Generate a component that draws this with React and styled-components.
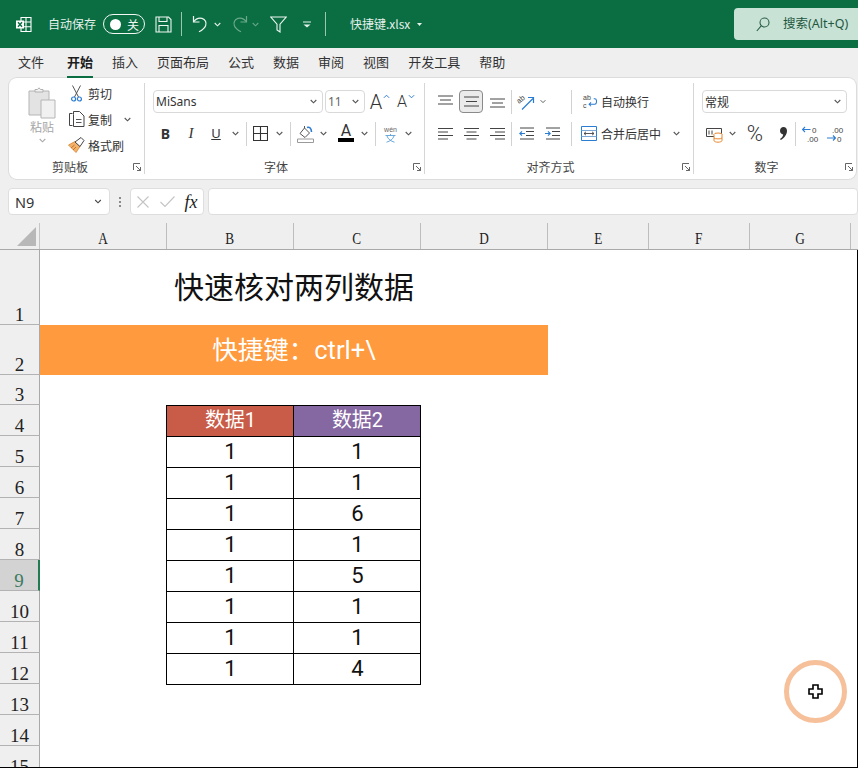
import React from "react";
import styled, { createGlobalStyle } from "styled-components";

const CJK = `"Noto Sans CJK SC", "Noto Sans", sans-serif`;
const CELL = `Roboto, "Noto Sans CJK SC", sans-serif`;
const HEAD = `"Liberation Serif", serif`;

const Global = createGlobalStyle`
  html, body { margin: 0; padding: 0; background: #fff; }
  #root { width: 858px; height: 768px; }
`;

const Page = styled.div`
  position: relative; width: 858px; height: 768px; overflow: hidden;
  background: #efefef; font-family: ${CJK}; display: flex; flex-direction: column;
`;

/* ---------- title bar ---------- */
const TitleBar = styled.header`
  height: 48px; flex: none; background: #0a6e42; color: #e6f1ec;
  display: flex; align-items: center; padding-left: 16px;
`;
const TitleText = styled.span`
  font-size: 12px; line-height: 16px; white-space: nowrap; margin-left: ${p => p.$ml || 0}px;
`;
const TitleIcon = styled.span`
  display: flex; align-items: center; justify-content: center; flex: none;
  width: ${p => p.$w}px; margin-left: ${p => p.$ml || 0}px;
  opacity: ${p => p.$dim ? 0.42 : 1};
`;
const TitleSep = styled.span`
  width: 1px; height: 24px; flex: none; background: #9cc6b2; margin-left: ${p => p.$ml}px;
`;
const Toggle = styled.span`
  box-sizing: border-box; width: 42px; height: 20px; margin-left: 7px; flex: none;
  border: 1px solid #f3f8f5; border-radius: 10px; display: flex; align-items: center;
  justify-content: space-between; padding: 0 5px 0 6px; font-size: 12px; color: #f3f8f5;
`;
const Knob = styled.span`
  width: 11px; height: 11px; border-radius: 50%; background: #fff;
`;
const SearchBox = styled.div`
  margin-left: auto; width: 124px; height: 32px; flex: none; box-sizing: border-box;
  background: #c8e3d6; border-radius: 4px 0 0 4px; display: flex; align-items: center;
  padding-left: 22px; color: #24573f; font-size: 12.5px; white-space: nowrap; overflow: hidden;
  font-family: "Noto Sans", "Noto Sans CJK SC", sans-serif;
`;
const SearchLabel = styled.span`margin-left: 13px; line-height: 16px; margin-top: -1px;`;

/* ---------- tabs ---------- */
const TabBar = styled.nav`
  height: 30px; flex: none; display: flex; align-items: stretch; padding-left: 18px; gap: 19px;
`;
const Tab = styled.span`
  position: relative; font-size: 13px; line-height: 28px; color: ${p => p.$active ? "#1d1d1d" : "#333"};
  font-weight: ${p => p.$active ? 700 : 400}; margin-left: ${p => p.$ml || 0}px; white-space: nowrap;
  border-bottom: 2px solid ${p => p.$active ? "#0a6e42" : "transparent"};
  height: 28px;
`;

/* ---------- ribbon ---------- */
const Ribbon = styled.section`
  box-sizing: border-box; flex: none; width: 847px; height: 101px; margin-left: 9px;
  background: #fff; border-radius: 8px; padding: 5px 0; display: flex;
  box-shadow: 0 0 0 1px #dcdcdc;
`;
const Group = styled.div`
  box-sizing: border-box; width: ${p => p.$w}px; flex: none; display: flex; flex-direction: column;
  border-right: ${p => p.$last ? "none" : "1px solid #d6d6d6"};
`;
const GroupBody = styled.div`
  display: flex; flex-direction: column; gap: 9px; padding-top: 7px; padding-left: 8px; flex: 1;
`;
const ClipBody = styled.div`display: flex; flex: 1;`;
const ToolRow = styled.div`
  display: flex; align-items: center; height: 23px; font-size: 12px; color: #333; white-space: nowrap;
`;
const Tool = styled.span`
  display: flex; align-items: center; justify-content: center; flex: none;
  width: ${p => p.$w}px; height: 23px; margin-left: ${p => p.$ml || 0}px;
  box-sizing: border-box; color: #444;
  ${p => p.$active ? "background:#ebebeb;border:1px solid #8a8a8a;border-radius:4px;" : ""}
`;
const Sep = styled.span`
  width: 1px; height: 24px; flex: none; background: #d2d2d2; margin-left: ${p => p.$ml || 0}px;
`;
const Select = styled.div`
  box-sizing: border-box; width: ${p => p.$w}px; height: 23px; flex: none; margin-left: ${p => p.$ml || 0}px;
  border: 1px solid #d9d9d9; border-radius: 4px; display: flex; align-items: center;
  justify-content: space-between; padding: 0 5px 0 2px; background: #fff;
  font-size: 12px; color: ${p => p.$muted ? "#666" : "#333"};
  font-family: "Noto Sans", ${CJK};
`;
const ToolText = styled.span`font-size: 12px; color: #333; margin-left: ${p => p.$ml || 0}px;`;
const LabelRow = styled.div`display: flex; align-items: center; height: 15px; flex: none;`;
const GroupLabel = styled.span`
  flex: 1; text-align: center; font-size: 12px; line-height: 15px; color: #444;
  padding-left: ${p => p.$pl || 0}px;
`;
const Launcher = styled.span`
  width: 17px; flex: none; display: flex; justify-content: flex-end; padding-right: 3px; box-sizing: border-box;
`;
const PasteCol = styled.div`
  width: 44px; margin-left: 11px; padding-top: 4px; display: flex; flex-direction: column;
  align-items: center; font-size: 12px; color: #a6a6a6; line-height: 16px;
`;
const PasteChev = styled.span`display: flex; margin-top: 3px;`;
const ClipCol = styled.div`display: flex; flex-direction: column; gap: 6px; margin-left: 1px;`;
const ClipRow = styled.div`display: flex; align-items: center; height: 20px; font-size: 12px; color: #333;`;
const ClipIcon = styled.span`
  width: 23px; display: flex; justify-content: center; flex: none;
`;
const ColorBar = styled.span`
  display: block; width: 16px; height: 4px; background: ${p => p.$c}; margin-top: -1px;
`;
const ColorTool = styled.span`
  display: flex; flex-direction: column; align-items: center; font-family: Roboto, sans-serif;
  font-size: 16px; line-height: 16px; color: #333; margin-top: -2px;
`;
const Glyph = styled.span`
  font-family: ${p => p.$serif ? HEAD : `"Noto Sans", sans-serif`}; line-height: 1; color: #333; font-size: ${p => p.$fs}px;
  font-weight: ${p => p.$bold ? 700 : 400};
  font-style: ${p => p.$italic ? "italic" : "normal"};
  text-decoration: ${p => p.$under ? "underline" : "none"};
`;
const Percent = styled.span`
  font-family: Roboto, sans-serif; font-weight: 300; font-size: 22px; line-height: 1; color: #333;
`;
const BigA = styled.span`
  font-family: Roboto, sans-serif; font-weight: 300; font-size: ${p => p.$fs}px; color: #333; line-height: 1;
`;
const Caret = styled.span`display: flex; align-self: flex-start; margin-top: 4px; margin-left: 1px;`;

/* ---------- formula bar ---------- */
const FormulaBar = styled.div`
  flex: none; height: 27px; margin-top: 9px; padding-left: 8px; display: flex; align-items: stretch;
`;
const FBox = styled.div`
  box-sizing: border-box; background: #fff; border: 1px solid #dedede; border-radius: 4px;
  display: flex; align-items: center; flex: none; width: ${p => p.$w}px; margin-left: ${p => p.$ml || 0}px;
`;
const NameText = styled.span`
  font-family: "Noto Sans", sans-serif; font-size: 14.5px; color: #333; margin-left: 6px; flex: 1;
`;
const NameChev = styled.span`display: flex; margin-right: 6px;`;
const Dots = styled.span`
  display: flex; flex-direction: column; justify-content: center; gap: 2px; margin-left: 9px; width: 2px;
`;
const Dot = styled.i`width: 2px; height: 2px; background: #8a8a8a; display: block;`;
const FxButton = styled.span`
  display: flex; justify-content: center; align-items: center; width: 24px; flex: none;
`;
const FxText = styled.span`
  font-family: ${HEAD}; font-style: italic; font-size: 18px; color: #222; line-height: 1;
`;

/* ---------- sheet ---------- */
const ColHeader = styled.div`
  flex: none; height: 27px; margin-top: 8px; display: flex; background: #efefef;
  border-bottom: 1px solid #a9a9a9; box-sizing: border-box;
`;
const Corner = styled.div`
  box-sizing: border-box; width: 40px; flex: none; display: flex; align-items: flex-end;
  justify-content: flex-end; padding: 0 3px 3px 0; border-right: 1px solid #c6c6c6;
`;
const ColHead = styled.div`
  box-sizing: border-box; width: ${p => p.$w}px; flex: none; border-right: 1px solid #bdbdbd;
  display: flex; align-items: flex-end; justify-content: center; overflow: hidden;
  font-family: ${HEAD}; font-size: 17px; line-height: 20px; color: #222;
`;
const ColLetter = styled.span`display: inline-block; transform: scaleX(0.78);`;
const Sheet = styled.div`
  flex: 1; min-height: 0; display: flex; background: #fff; overflow: hidden;
  border-right: 1px solid #000; border-bottom: 1px solid #000;
`;
const RowHeads = styled.div`display: flex; flex-direction: column; width: 40px; flex: none;`;
const RowHead = styled.div`
  box-sizing: border-box; height: ${p => p.$h}px; flex: none; width: 40px;
  background: ${p => p.$active ? "#d3d3d3" : "#efefef"};
  border-bottom: 1px solid #b3b3b3;
  border-right: ${p => p.$active ? "2px solid #217a50" : "1px solid #a9a9a9"};
  display: flex; align-items: flex-end; justify-content: center;
  font-family: ${HEAD}; font-size: 19px; line-height: 18px;
  color: ${p => p.$active ? "#3d7a5e" : "#222"};
`;
const Cells = styled.div`flex: 1; min-width: 0;`;
const Title = styled.div`
  width: 508px; height: 75px; box-sizing: border-box; display: flex; align-items: flex-end;
  justify-content: center; font-size: 30px; line-height: 44px; color: #111; padding-bottom: 18px;
`;
const Banner = styled.div`
  width: 508px; height: 50px; background: #ff9a3e; color: #fff; font-size: 25.5px; line-height: 50px;
  text-align: center; margin-bottom: 30px; white-space: pre; font-family: ${CELL};
`;
const DataTable = styled.div`
  margin-left: 126px; width: 255px; box-sizing: border-box; display: grid;
  grid-template-columns: 127px 127px; border-left: 1px solid #000; border-top: 1px solid #000;
`;
const DataCell = styled.div`
  box-sizing: border-box; height: 31px; border-right: 1px solid #000; border-bottom: 1px solid #000;
  text-align: center; font-family: ${CELL}; font-size: ${p => p.$head ? 20 : 22}px;
  line-height: 29px; padding-left: 1px;
  background: ${p => p.$bg || "transparent"}; color: ${p => p.$bg ? "#fff" : "#111"};
`;

/* ---------- cursor highlight ---------- */
const CursorRing = styled.div`
  position: absolute; left: 784px; top: 660px; width: 63px; height: 63px; box-sizing: border-box;
  border: 5px solid #f5c09a; border-radius: 50%; display: flex; align-items: center; justify-content: center;
`;

/* ---------- icons ---------- */
const Chev = ({ c = "#555", w = 7 }) => (
  <svg width={w} height="5" viewBox="0 0 7 5" fill="none"><path d="M.7 1 3.5 3.8 6.3 1" stroke={c} strokeWidth="1.1" /></svg>
);
const ExcelIcon = () => (
  <svg width="16" height="17" viewBox="0 0 16 17" fill="none">
    <path d="M5 1.5h10v14H5zM10 1.5v14M5 6h10M5 10.8h10" stroke="#fff" strokeWidth="1.1" />
    <rect x="0" y="4.5" width="8" height="8" fill="#fff" />
    <path d="M2 6.2 6 10.8M6 6.2 2 10.8" stroke="#0a6e42" strokeWidth="1.4" />
  </svg>
);
const SaveIcon = () => (
  <svg width="17" height="17" viewBox="0 0 17 17" fill="none" stroke="#eef6f2" strokeWidth="1.1">
    <path d="M1 1h12.5L16 3.5V16H1z" /><path d="M4 1v4.5h8V1M4 16V9.5h9V16" />
  </svg>
);
const UndoIcon = ({ flip }) => (
  <svg width="16" height="18" viewBox="0 0 16 18" fill="none" stroke="#f0f7f3" strokeWidth="1.2"
    style={flip ? { transform: "scaleX(-1)" } : undefined}>
    <path d="M1.5 1v6h6" /><path d="M1.5 7C4 3.5 7 2.6 10 3.4c3.4 1 4.8 4.4 3.6 7.4-.8 2-2.6 4-6.6 6" />
  </svg>
);
const FunnelIcon = () => (
  <svg width="17" height="17" viewBox="0 0 17 17" fill="none" stroke="#f0f7f3" strokeWidth="1.1">
    <path d="M.8 1h15.4L10 8.2V16L7 14V8.2z" />
  </svg>
);
const CustomizeIcon = () => (
  <svg width="8" height="7" viewBox="0 0 8 7" fill="none"><path d="M0 1h8" stroke="#e6f1ec" /><path d="M.5 3.5h7L4 6.5z" fill="#e6f1ec" /></svg>
);
const CustomizeCaret = () => (
  <svg width="5" height="3" viewBox="0 0 5 3"><path d="M0 0h5L2.5 3z" fill="#e6f1ec" /></svg>
);
const SearchIcon = () => (
  <svg width="14" height="15" viewBox="0 0 14 15" fill="none" stroke="#2b5e46" strokeWidth="1.1">
    <circle cx="8.5" cy="5.5" r="4.5" /><path d="M5.2 8.8.8 14" />
  </svg>
);
const PasteIcon = () => (
  <svg width="28" height="32" viewBox="0 0 28 32" fill="none">
    <path d="M1 4h20v24H1z" fill="#e3e3e3" stroke="#b5b5b5" />
    <path d="M7 5V2.5h2.5L11 .8l1.5 1.7H15V5z" fill="#f1f1f1" stroke="#b0b0b0" />
    <path d="M13 13h14v18H13z" fill="#f1f1f1" stroke="#b5b5b5" />
  </svg>
);
const CutIcon = () => (
  <svg width="11" height="17" viewBox="0 0 11 17" fill="none">
    <path d="M1.5 .5 7.5 12M9.5 .5 3.5 12" stroke="#555" strokeWidth="1" />
    <circle cx="2.6" cy="14" r="2" stroke="#2b7cd3" strokeWidth="1.2" />
    <circle cx="8.4" cy="14" r="2" stroke="#2b7cd3" strokeWidth="1.2" />
  </svg>
);
const CopyIcon = () => (
  <svg width="16" height="16" viewBox="0 0 16 16" fill="none" stroke="#444" strokeWidth="1">
    <path d="M3.5 14.5H.5V2.5h3" /><path d="M4.5 3.5V.5h6l4.5 4.5v10.5H4.5z" />
    <path d="M7 8.5h5.5M7 11.5h5.5" strokeWidth=".9" />
  </svg>
);
const FormatIcon = () => (
  <svg width="17" height="16" viewBox="0 0 17 16" fill="none">
    <path d="M.5 8 7 4.5l5 5L8 15.5z" fill="#f4b36b" stroke="#d9822b" strokeWidth=".8" />
    <path d="M7 5 13 .5l3 3-4 6z" fill="#fff" stroke="#444" strokeWidth="1" />
    <path d="M3 11 6.5 8M5 13l3-3" stroke="#b8661c" strokeWidth=".8" />
  </svg>
);
const LauncherIcon = () => (
  <svg width="8" height="8" viewBox="0 0 8 8" fill="none" stroke="#555" strokeWidth=".9">
    <path d="M.5 7V.5H7M3 3l4.500 4.500M7.500 4v3.500H4" />
  </svg>
);
const FontUp = ({ down }) => (
  <svg width="7" height="5" viewBox="0 0 8 5" fill="none">
    <path d={down ? "M1 1l3 3 3-3" : "M1 4l3-3 3 3"} stroke="#2b7cd3" strokeWidth="1.1" />
  </svg>
);
const BorderIcon = () => (
  <svg width="15" height="15" viewBox="0 0 15 15" fill="none" stroke="#333" strokeWidth="1.1">
    <path d="M.5.5h14v14H.5zM7.500.5v14M.5 7.500h14" />
  </svg>
);
const FillIcon = () => (
  <svg width="17" height="18" viewBox="0 0 17 18" fill="none">
    <path d="M3 8.500 7.500 3l5 5L8 12.500z" stroke="#555" strokeWidth="1" />
    <path d="M7.500 3V1" stroke="#555" />
    <path d="M10 2.500c2.500-1 4.500.8 4.500 4.500" stroke="#2b7cd3" strokeWidth="1.6" />
    <path d="M.5 14h16v3.500H.5z" fill="#fff" stroke="#9a9a9a" />
  </svg>
);
const WenIcon = () => (
  <svg width="15" height="18" viewBox="0 0 15 18" fill="none">
    <path d="M2.500 10.500h10M7.500 9v1.500M4 11c1 3.200 4 5.200 7.500 6.200M11 11c-1 3.200-4 5.200-7.500 6.200" stroke="#5a9fd8" strokeWidth=".9" />
    <text x="7.500" y="6.600" textAnchor="middle" fontSize="7" fontFamily="Liberation Sans, sans-serif" fill="#666">wén</text>
  </svg>
);
const Lines = ({ widths, ys }) => (
  <svg width="15" height="13" viewBox="0 0 15 13" fill="none" stroke="#444" strokeWidth="1">
    {ys.map((y, i) => <path key={i} d={`M${(15 - widths[i]) / 2} ${y}h${widths[i]}`} />)}
  </svg>
);
const AlignLines = ({ mode }) => {
  const w = [15, 10, 15, 10];
  return (
    <svg width="15" height="14" viewBox="0 0 15 14" fill="none" stroke="#444" strokeWidth="1">
      {[1.5, 5, 8.5, 12].map((y, i) => {
        const x = mode === "l" ? 0 : mode === "r" ? 15 - w[i] : (15 - w[i]) / 2;
        return <path key={i} d={`M${x} ${y}h${w[i]}`} />;
      })}
    </svg>
  );
};
const Indent = ({ out }) => (
  <svg width="15" height="13" viewBox="0 0 15 13" fill="none">
    <path d="M1 1h14M7 4.500h8M7 8.500h8M1 12h14" stroke="#444" />
    <path d={out ? "M6 6.500H.8M3 4.300.8 6.500 3 8.700" : "M0 6.500h5.200M3 4.300l2.200 2.200L3 8.700"} stroke="#2b7cd3" strokeWidth="1.1" />
  </svg>
);
const OrientIcon = () => (
  <svg width="20" height="18" viewBox="0 0 20 18" fill="none">
    <text x="3" y="11" fontSize="7.5" fontFamily="Liberation Sans, sans-serif" fill="#444" transform="rotate(-40 3 11)">ab</text>
    <path d="M6 16.500 17 5.500M12 4.500h5.500V10" stroke="#2b7cd3" strokeWidth="1.2" />
  </svg>
);
const WrapIcon = () => (
  <svg width="15" height="17" viewBox="0 0 15 17" fill="none">
    <text x="0" y="7" fontSize="7.5" fontFamily="Liberation Sans, sans-serif" fill="#444">ab</text>
    <text x="0" y="15.500" fontSize="7.5" fontFamily="Liberation Sans, sans-serif" fill="#444">c</text>
    <path d="M11.500 5.500h1.200c1.400 0 1.800 1.200 1.800 2.800s-.6 3.200-1.800 3.200H6.500M8.600 9.400l-2.100 2.100 2.100 2.100" stroke="#2b7cd3" strokeWidth="1.1" />
  </svg>
);
const MergeIcon = () => (
  <svg width="16" height="15" viewBox="0 0 16 15" fill="none">
    <path d="M.5.5h15v14H.5z" fill="#fff" stroke="#2b7cd3" />
    <path d="M.5 4.500h15M.5 10.500h15" stroke="#7aa9d6" />
    <path d="M3 7.500h10M5 5.800 3 7.500l2 1.700M11 5.800l2 1.700-2 1.700" stroke="#444" strokeWidth=".9" />
  </svg>
);
const NumFmtIcon = () => (
  <svg width="17" height="18" viewBox="0 0 17 18" fill="none">
    <path d="M.5 3.500h15v8H.5z" stroke="#444" />
    <path d="M3 5.500v4M6 5.500v4" stroke="#444" />
    <ellipse cx="12" cy="9.500" rx="4" ry="1.500" fill="#fff" stroke="#e8862a" />
    <path d="M8 9.500v6c0 1 2 1.700 4 1.700s4-.7 4-1.700v-6M8 13c1 1.200 7 1.200 8 0" fill="#fff" stroke="#e8862a" />
  </svg>
);
const CommaIcon = () => (
  <svg width="7" height="13" viewBox="0 0 7 13"><path d="M3.500 0C5.600 0 7 1.600 7 3.800 7 7.600 4.400 11 .8 13L0 12c2-1.400 3-3 3.200-4.600C1.400 7.400 0 5.900 0 3.800 0 1.600 1.500 0 3.500 0z" fill="#333" /></svg>
);
const DecIcon = ({ inc }) => (
  <svg width="17" height="18" viewBox="0 0 17 18" fill="none">
    <text x={inc ? 5 : 10} y="7.500" fontSize="8" fontFamily="Liberation Sans, sans-serif" fill="#444">{inc ? ".00" : "0"}</text>
    <text x={inc ? 10 : 5} y="16.500" fontSize="8" fontFamily="Liberation Sans, sans-serif" fill="#444">{inc ? "0" : ".00"}</text>
    {inc
      ? <path d="M0 13h8.500M6 10.500l2.500 2.500L6 15.500" stroke="#2b7cd3" strokeWidth="1.1" />
      : <path d="M8.500 4.500H.5M3 2 .5 4.500 3 7" stroke="#2b7cd3" strokeWidth="1.1" />}
  </svg>
);
const XIcon = () => (
  <svg width="12" height="12" viewBox="0 0 12 12" stroke="#c4c4c4" strokeWidth="1.1" fill="none"><path d="M.5.5l11 11M11.500.5l-11 11" /></svg>
);
const CheckIcon = () => (
  <svg width="15" height="11" viewBox="0 0 15 11" stroke="#c4c4c4" strokeWidth="1.1" fill="none"><path d="M.5 6l4.500 4.500L14.500.5" /></svg>
);
const CornerTri = () => (
  <svg width="19" height="19" viewBox="0 0 19 19"><path d="M19 0v19H0z" fill="#b8b8b8" /></svg>
);
const PlusCursor = () => (
  <svg width="15" height="15" viewBox="0 0 15 15">
    <path d="M5 1h5v4h4v5h-4v4H5v-4H1V5h4z" fill="#fff" stroke="#000" strokeWidth="1.6" />
  </svg>
);

const tabs = ["文件", "开始", "插入", "页面布局", "公式", "数据", "审阅", "视图", "开发工具", "帮助"];
const cols = [["A", 127], ["B", 127], ["C", 127], ["D", 127], ["E", 101], ["F", 101], ["G", 101]];
const rows = [[1, 75], [2, 50], [3, 30], ...[4, 5, 6, 7, 8, 9, 10, 11, 12, 13, 14, 15].map(n => [n, 31])];
const data = [[1, 1], [1, 1], [1, 6], [1, 1], [1, 5], [1, 1], [1, 1], [1, 4]];

export default function App() {
  return (
    <Page>
      <Global />
      <TitleBar>
        <TitleIcon $w={16}><ExcelIcon /></TitleIcon>
        <TitleText $ml={16}>自动保存</TitleText>
        <Toggle><Knob />关</Toggle>
        <TitleIcon $w={17} $ml={10}><SaveIcon /></TitleIcon>
        <TitleSep $ml={9} />
        <TitleIcon $w={16} $ml={10}><UndoIcon /></TitleIcon>
        <TitleIcon $w={7} $ml={6}><Chev c="#e6f1ec" /></TitleIcon>
        <TitleIcon $w={16} $ml={11} $dim><UndoIcon flip /></TitleIcon>
        <TitleIcon $w={7} $ml={4} $dim><Chev c="#e6f1ec" /></TitleIcon>
        <TitleIcon $w={17} $ml={11}><FunnelIcon /></TitleIcon>
        <TitleIcon $w={8} $ml={16}><CustomizeIcon /></TitleIcon>
        <TitleSep $ml={14} />
        <TitleText $ml={24}>快捷键.xlsx</TitleText>
        <TitleIcon $w={5} $ml={7}><CustomizeCaret /></TitleIcon>
        <SearchBox><SearchIcon /><SearchLabel>搜索(Alt+Q)</SearchLabel></SearchBox>
      </TitleBar>

      <TabBar>
        {tabs.map((t, i) => <Tab key={t} $active={i === 1} $ml={i === 1 ? 4 : 0}>{t}</Tab>)}
      </TabBar>

      <Ribbon>
        <Group $w={136}>
          <ClipBody>
            <PasteCol>
              <PasteIcon />
              粘贴
              <PasteChev><Chev c="#aaa" /></PasteChev>
            </PasteCol>
            <ClipCol>
              <ClipRow><ClipIcon><CutIcon /></ClipIcon>剪切</ClipRow>
              <ClipRow>
                <ClipIcon><CopyIcon /></ClipIcon>复制
                <Tool $w={7} $ml={12}><Chev /></Tool>
              </ClipRow>
              <ClipRow><ClipIcon><FormatIcon /></ClipIcon>格式刷</ClipRow>
            </ClipCol>
          </ClipBody>
          <LabelRow>
            <GroupLabel $pl={4}>剪贴板</GroupLabel>
            <Launcher><LauncherIcon /></Launcher>
          </LabelRow>
        </Group>

        <Group $w={280}>
          <GroupBody>
            <ToolRow>
              <Select $w={170}>MiSans<Chev /></Select>
              <Select $w={40} $ml={2} $muted>11<Chev /></Select>
              <Tool $w={24} $ml={3}><BigA $fs={20}>A</BigA><Caret><FontUp /></Caret></Tool>
              <Tool $w={22} $ml={3}><BigA $fs={16}>A</BigA><Caret><FontUp down /></Caret></Tool>
            </ToolRow>
            <ToolRow>
              <Tool $w={25}><Glyph $fs={14} $bold>B</Glyph></Tool>
              <Tool $w={26}><Glyph $fs={15} $italic $serif>I</Glyph></Tool>
              <Tool $w={24}><Glyph $fs={13} $under>U</Glyph></Tool>
              <Tool $w={14}><Chev /></Tool>
              <Sep $ml={4} />
              <Tool $w={27}><BorderIcon /></Tool>
              <Tool $w={10}><Chev /></Tool>
              <Sep $ml={6} />
              <Tool $w={28}><FillIcon /></Tool>
              <Tool $w={8}><Chev /></Tool>
              <Tool $w={26} $ml={6}><ColorTool>A<ColorBar $c="#000" /></ColorTool></Tool>
              <Tool $w={10}><Chev /></Tool>
              <Sep $ml={6} />
              <Tool $w={28}><WenIcon /></Tool>
              <Tool $w={8}><Chev /></Tool>
            </ToolRow>
          </GroupBody>
          <LabelRow>
            <GroupLabel>字体</GroupLabel>
            <Launcher><LauncherIcon /></Launcher>
          </LabelRow>
        </Group>

        <Group $w={269}>
          <GroupBody>
            <ToolRow>
              <Tool $w={24}><Lines widths={[15, 11, 15]} ys={[1, 5, 9]} /></Tool>
              <Tool $w={24} $ml={2} $active><Lines widths={[15, 11, 15]} ys={[2, 6.5, 11]} /></Tool>
              <Tool $w={24} $ml={2}><Lines widths={[15, 11, 15]} ys={[4, 8, 12]} /></Tool>
              <Sep $ml={2} />
              <Tool $w={28}><OrientIcon /></Tool>
              <Tool $w={6}><Chev /></Tool>
              <Sep $ml={25} />
              <Tool $w={14} $ml={11}><WrapIcon /></Tool>
              <ToolText $ml={4}>自动换行</ToolText>
            </ToolRow>
            <ToolRow>
              <Tool $w={24}><AlignLines mode="l" /></Tool>
              <Tool $w={24} $ml={2}><AlignLines mode="c" /></Tool>
              <Tool $w={24} $ml={2}><AlignLines mode="r" /></Tool>
              <Sep $ml={2} />
              <Tool $w={28}><Indent out /></Tool>
              <Tool $w={24}><Indent /></Tool>
              <Sep $ml={7} />
              <Tool $w={16} $ml={9}><MergeIcon /></Tool>
              <ToolText $ml={4}>合并后居中</ToolText>
              <Tool $w={30}><Chev /></Tool>
            </ToolRow>
          </GroupBody>
          <LabelRow>
            <GroupLabel>对齐方式</GroupLabel>
            <Launcher><LauncherIcon /></Launcher>
          </LabelRow>
        </Group>

        <Group $w={162} $last>
          <GroupBody>
            <ToolRow><Select $w={145}>常规<Chev /></Select></ToolRow>
            <ToolRow>
              <Tool $w={24}><NumFmtIcon /></Tool>
              <Tool $w={12}><Chev /></Tool>
              <Tool $w={34}><Percent>%</Percent></Tool>
              <Tool $w={22}><CommaIcon /></Tool>
              <Sep $ml={1} />
              <Tool $w={28}><DecIcon /></Tool>
              <Tool $w={22}><DecIcon inc /></Tool>
            </ToolRow>
          </GroupBody>
          <LabelRow>
            <GroupLabel>数字</GroupLabel>
            <Launcher><LauncherIcon /></Launcher>
          </LabelRow>
        </Group>
      </Ribbon>

      <FormulaBar>
        <FBox $w={102}><NameText>N9</NameText><NameChev><Chev c="#444" w={10} /></NameChev></FBox>
        <Dots><Dot /><Dot /><Dot /></Dots>
        <FBox $w={74} $ml={9}>
          <FxButton><XIcon /></FxButton>
          <FxButton><CheckIcon /></FxButton>
          <FxButton><FxText>fx</FxText></FxButton>
        </FBox>
        <FBox $w={650} $ml={4} />
      </FormulaBar>

      <ColHeader>
        <Corner><CornerTri /></Corner>
        {cols.map(([c, w]) => <ColHead key={c} $w={w}><ColLetter>{c}</ColLetter></ColHead>)}
      </ColHeader>

      <Sheet>
        <RowHeads>
          {rows.map(([n, h]) => <RowHead key={n} $h={h} $active={n === 9}>{n}</RowHead>)}
        </RowHeads>
        <Cells>
          <Title>快速核对两列数据</Title>
          <Banner>快捷键：ctrl+\</Banner>
          <DataTable>
            <DataCell $head $bg="#c95c48">数据1</DataCell>
            <DataCell $head $bg="#8567a1">数据2</DataCell>
            {data.flatMap(([a, b], i) => [
              <DataCell key={`a${i}`}>{a}</DataCell>,
              <DataCell key={`b${i}`}>{b}</DataCell>,
            ])}
          </DataTable>
        </Cells>
      </Sheet>

      <CursorRing><PlusCursor /></CursorRing>
    </Page>
  );
}
